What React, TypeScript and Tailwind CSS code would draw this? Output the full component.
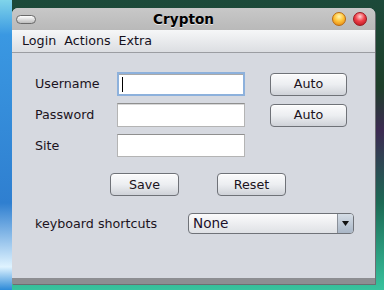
const font = { fontFamily: '"DejaVu Sans", "Liberation Sans", sans-serif' };

function GelButton({ label, className }: { label: string; className: string }) {
  return (
    <button
      type="button"
      className={`flex items-center justify-center rounded-[4px] border border-[#6f7278] bg-gradient-to-b from-[#fbfbfc] via-[#eceef1] to-[#cfd2d8] text-[12.7px] text-[#1b1320] shadow-[inset_0_1px_0_#fff] ${className}`}
    >
      {label}
    </button>
  );
}

function TextField({ focused }: { focused?: boolean }) {
  return (
    <div
      className={`flex h-[24px] w-[128px] items-center bg-white px-[3px] ${
        focused
          ? "border-2 border-[#8db1dc] shadow-[inset_0_1px_0_#a9a9a9]"
          : "border border-[#b4b4b4] border-t-[#8f8f8f] shadow-[inset_0_1px_0_#d8d8d8]"
      }`}
    >
      {focused ? <span className="h-[15px] w-[1px] bg-black" /> : null}
    </div>
  );
}

export default function App() {
  return (
    <div className="flex h-[290px] w-[384px] overflow-hidden" style={font}>
      {/* desktop, left edge */}
      <div className="h-full w-[12px] shrink-0 bg-[linear-gradient(to_bottom,#7fd4ea_0,#3a98e2_12%,#2f7fd0_70%,#dff3ff_92%,#2c8ad8_100%)]" />

      <div className="flex h-full flex-1 flex-col bg-[linear-gradient(to_bottom,#1c4a3a,#1e3f2a_30%,#3c2a52_45%,#1c6a55_70%,#38c39e)] pt-[8px]">
        <div className="flex h-[276px] w-[363px] flex-col overflow-hidden rounded-t-[6px] border-b-[6px] border-[#8d8e92] bg-[#d6d9e0] shadow-[1px_1px_0_#6c6e72]">
          {/* title bar */}
          <div className="flex h-[22px] items-center bg-gradient-to-b from-[#c8c8c8] to-[#b9b9b9] px-[4px]">
            <div className="flex flex-1 items-center">
              <span className="h-[9px] w-[20px] rounded-full border border-[#6a6a6a] bg-gradient-to-b from-[#ffffff] to-[#bdbdbd]" />
            </div>
            <span className="mr-[16px] text-[13.6px] font-bold text-black [text-shadow:0_1px_0_#e8e8e8]">Crypton</span>
            <div className="flex flex-1 items-center justify-end gap-[7px] pr-[4px]">
              <span className="h-[14px] w-[14px] rounded-full border border-[#b86a10] bg-[radial-gradient(circle_at_50%_30%,#fff6b0_0%,#ffc43a_45%,#e07a0a_100%)]" />
              <span className="h-[14px] w-[14px] rounded-full border border-[#9c1820] bg-[radial-gradient(circle_at_50%_30%,#ffd0d0_0%,#f0404a_45%,#b01018_100%)]" />
            </div>
          </div>

          {/* menu bar */}
          <div className="flex h-[23px] items-center gap-[8px] border-b border-[#9b9da2] bg-gradient-to-b from-[#f6f7f8] to-[#dcdee2] pl-[10px] text-[12.7px] text-[#15101c]">
            <span>Login</span>
            <span>Actions</span>
            <span>Extra</span>
          </div>

          {/* form */}
          <div className="flex flex-col pl-[23px] pt-[19px] text-[12.7px] text-[#1b1320]">
            <div className="grid grid-cols-[82px_128px_102px] items-center gap-y-[7px]">
              <span>Username</span>
              <TextField focused />
              <GelButton label="Auto" className="ml-[25px] h-[23px] w-[77px]" />

              <span>Password</span>
              <TextField />
              <GelButton label="Auto" className="ml-[25px] h-[23px] w-[77px]" />

              <span>Site</span>
              <div className="flex h-[23px] w-[128px] border border-[#b4b4b4] border-t-[#8f8f8f] bg-white" />
              <span />
            </div>

            <div className="mt-[16px] flex gap-[38px] pl-[75px]">
              <GelButton label="Save" className="h-[23px] w-[69px]" />
              <GelButton label="Reset" className="h-[23px] w-[69px]" />
            </div>

            <div className="mt-[17px] flex items-center">
              <span className="w-[153px]">keyboard shortcuts</span>
              <div className="flex h-[21px] w-[166px] overflow-hidden rounded-[4px] border border-[#6f7278] bg-gradient-to-b from-[#fbfbfc] to-[#dfe1e5]">
                <span className="flex flex-1 items-center pl-[4px] text-[13.6px] text-[#1b0f2a]">None</span>
                <span className="flex w-[16px] items-center justify-center border-l border-[#8a9099] bg-gradient-to-b from-[#d5dde6] to-[#a9b6c6]">
                  <svg width="7" height="5" viewBox="0 0 7 5">
                    <path d="M0 0 H7 L3.5 5 Z" fill="#111" />
                  </svg>
                </span>
              </div>
            </div>
          </div>
        </div>
      </div>
    </div>
  );
}
